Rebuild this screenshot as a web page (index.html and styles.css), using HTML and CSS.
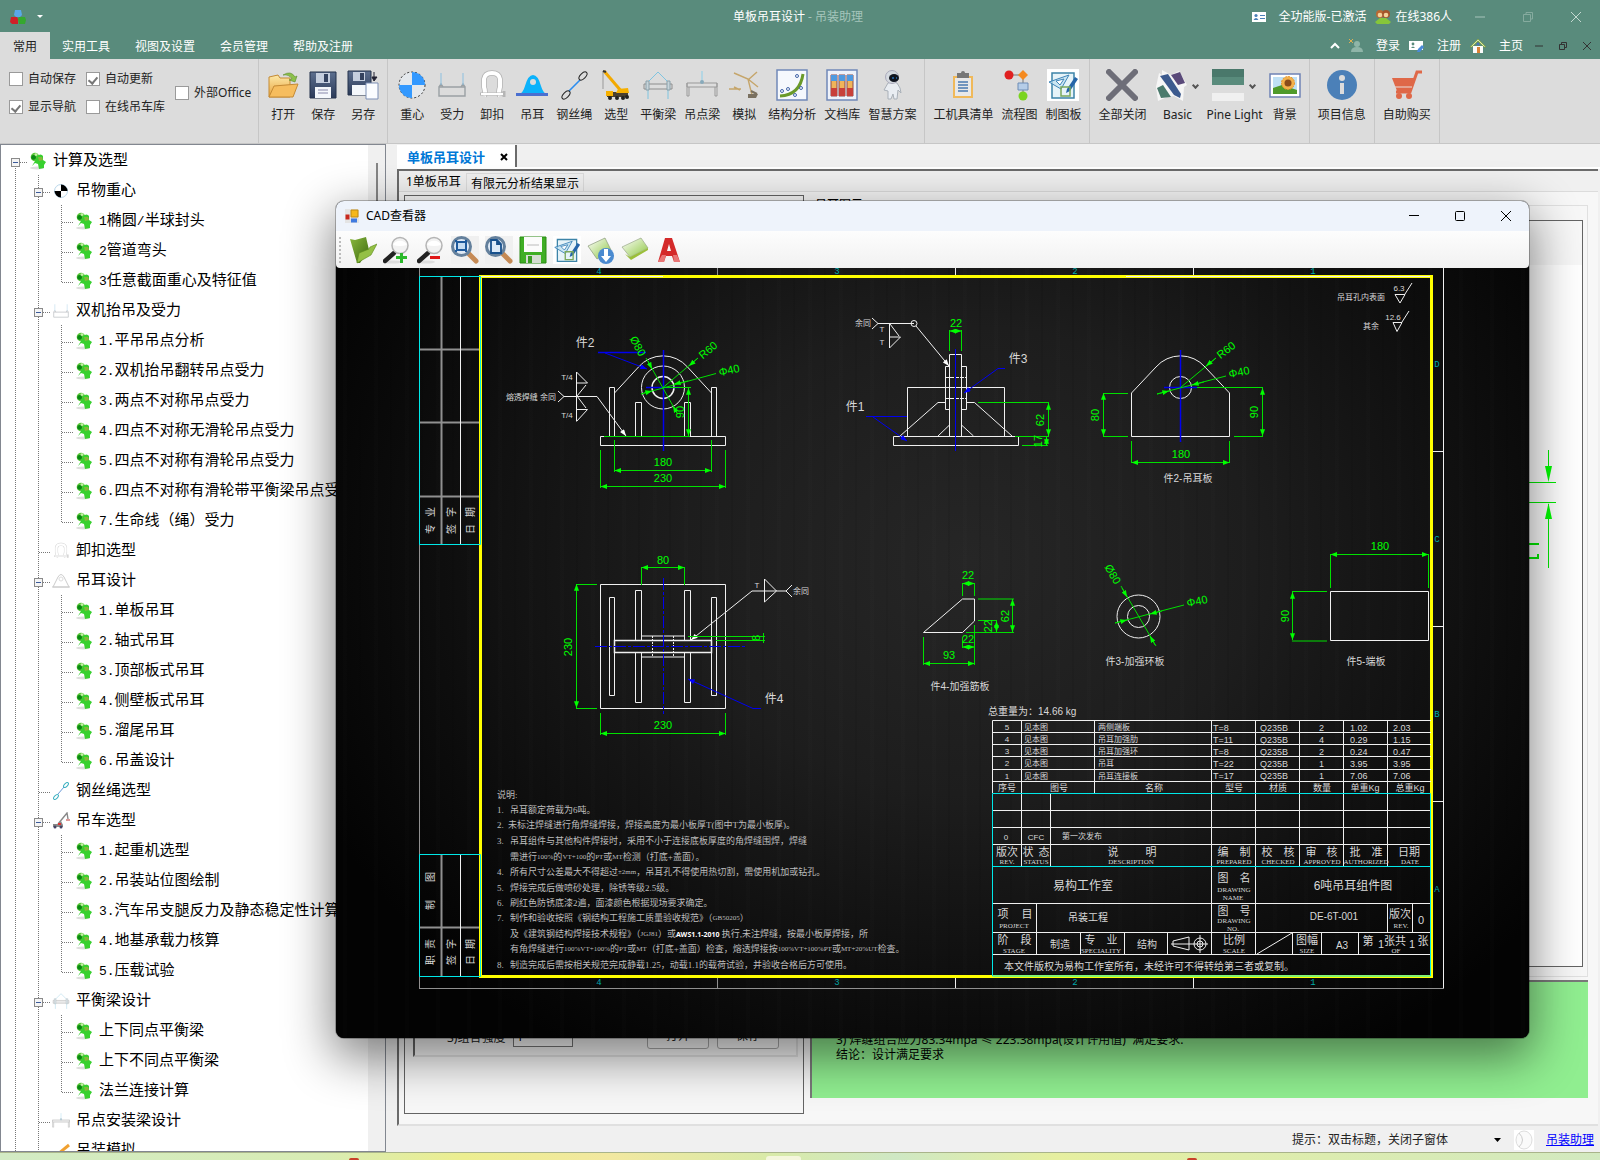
FILE: index.html
```html
<!DOCTYPE html>
<html lang="zh-CN">
<head>
<meta charset="utf-8">
<title>单板吊耳设计 - 吊装助理</title>
<link rel="stylesheet" href="styles.css">
</head>
<body>
<svg class="defs" width="0" height="0" aria-hidden="true">
  <defs>
    <linearGradient id="g-folder" x1="0" y1="0" x2="0" y2="1"><stop offset="0" stop-color="#fde9a8"/><stop offset="1" stop-color="#e8a33c"/></linearGradient>
    <linearGradient id="g-disk" x1="0" y1="0" x2="0" y2="1"><stop offset="0" stop-color="#5d6f8f"/><stop offset="1" stop-color="#2b3a58"/></linearGradient>
    <linearGradient id="g-leaf" x1="0" y1="0" x2="1" y2="1"><stop offset="0" stop-color="#8ab83e"/><stop offset="1" stop-color="#3c6a10"/></linearGradient>
    <linearGradient id="g-card" x1="0" y1="0" x2="1" y2="1"><stop offset="0" stop-color="#fff"/><stop offset="1" stop-color="#8dc63f"/></linearGradient>
  </defs>
  <symbol id="i-node" viewBox="0 0 16 18"><ellipse cx="7" cy="16" rx="7" ry="1.5" fill="#ddd"/><circle cx="5" cy="5" r="4.3" fill="#5cc83a"/><circle cx="3.6" cy="5.4" r="2.4" fill="#0b8a14"/><circle cx="6" cy="2.600" r="1.4" fill="#c5f0a8"/><path d="M7 4q4-3 6 0v4l3 2-2 3v3l-5 1-1-5-3-1-3 3 3-5z" fill="#38d02f"/><path d="M8 5l4 0 1 3-4 1z" fill="#86b83c"/></symbol>
  <symbol id="i-cg" viewBox="0 0 32 32"><circle cx="16" cy="16" r="13" fill="#e4e8ec" stroke="#333" stroke-dasharray="2 2"/><path d="M16 16V3a13 13 0 0 1 13 13zM16 16v13A13 13 0 0 1 3 16z" fill="#3399ff"/></symbol>
  <symbol id="i-cgs" viewBox="0 0 18 18"><circle cx="9" cy="9" r="6.500" fill="#fff" stroke="#b9d7ea"/><path d="M9 9V2.500a6.500 6.500 0 0 1 6.500 6.500zM9 9v6.500A6.500 6.500 0 0 1 2.500 9z" fill="#000"/></symbol>
  <symbol id="i-force" viewBox="0 0 32 32"><path d="M3 18h26v9H3zM3 18l2-3 2 3M25 18l2-3 2 3" fill="none" stroke="#9aa0a4" stroke-width="1.4"/><path d="M5 4v12M27 4v12" stroke="#8cc0e0" stroke-width="1"/></symbol>
  <symbol id="i-shackle" viewBox="0 0 32 32"><path d="M8 27q2-4 0-9V10q1-6 8-6t8 6v8q-2 5 0 9" fill="none" stroke="#b4b4b4" stroke-width="5.500"/><path d="M8 27q2-4 0-9V10q1-6 8-6t8 6v8q-2 5 0 9" fill="none" stroke="#fff" stroke-width="4"/><path d="M4 25h24M28 22v6" stroke="#b5b5b5" stroke-width="3"/><path d="M5 25h22" stroke="#fff" stroke-width="2"/></symbol>
  <symbol id="i-lug" viewBox="0 0 32 32"><path d="M3 25q4-1 6-8Q12 6 17 6t8 11q2 7 6 8z" fill="#0bb2fb"/><path d="M0 24h32v3H0z" fill="#4a6fd0"/><circle cx="17" cy="13" r="3" fill="#dcdcdc"/></symbol>
  <symbol id="i-rope" viewBox="0 0 32 32"><path d="M11 22L22 11" stroke="#2a8df0" stroke-width="1.6"/><ellipse cx="25" cy="7" rx="5" ry="2.6" transform="rotate(-45 25 7)" fill="none" stroke="#222"/><ellipse cx="8" cy="26" rx="5" ry="2.6" transform="rotate(-45 8 26)" fill="none" stroke="#222"/></symbol>
  <symbol id="i-crane" viewBox="0 0 32 32"><path d="M4 2L22 23" stroke="#f2a900" stroke-width="3"/><path d="M3 2v18" stroke="#999"/><path d="M3 2l3 1" stroke="#333" stroke-width="2"/><path d="M7 23h21v5H7z" fill="#4a4030"/><path d="M6 22h7v5H6zM18 20l10-1 1 5H16z" fill="#f6b000"/><g fill="#222"><circle cx="10" cy="29" r="2"/><circle cx="17" cy="29" r="2"/><circle cx="23" cy="29" r="2"/><circle cx="27" cy="28" r="2"/></g></symbol>
  <symbol id="i-beam" viewBox="0 0 32 32"><path d="M5 14L16 3l11 11M6 20v10M26 20v10" fill="none" stroke="#7fc4e0"/><path d="M2 15h28v5H2z" fill="#ddd" stroke="#8e8e8e"/><path d="M4 12h3v9H4zM25 12h3v9h-3z" fill="#c7d4da" stroke="#8aa0aa"/></symbol>
  <symbol id="i-spread" viewBox="0 0 32 32"><path d="M16 2v11" stroke="#8cd0ea"/><path d="M1 14h30v4H1zM1 14v13h2V18M31 14v13h-2V18" fill="#ddd" stroke="#999"/><circle cx="16" cy="13" r="2" fill="#8ab"/></symbol>
  <symbol id="i-sim" viewBox="0 0 32 32"><path d="M6 4l14 6 4 16M29 3l-9 8M20 10l10 8M1 20h12M6 18l6 3" fill="none" stroke="#c5a56a" stroke-width="1.4"/><path d="M20 25h10l-2 4h-8z" fill="#7a7060"/><path d="M23 22l6 3" stroke="#7a7060" stroke-width="2"/></symbol>
  <symbol id="i-curve" viewBox="0 0 32 32"><path d="M1 1h30v30H1z" fill="#f5f8fd" stroke="#7088b8" stroke-width="1.5"/><path d="M4 27Q24 26 27 5" fill="none" stroke="#6a9a2a" stroke-width="3"/><g fill="none" stroke="#4466a8"><circle cx="21" cy="7" r="1.5"/><circle cx="6" cy="22" r="1.5"/><circle cx="12" cy="20" r="1.5"/><circle cx="25" cy="19" r="1.5"/><circle cx="19" cy="26" r="1.5"/></g></symbol>
  <symbol id="i-books" viewBox="0 0 32 32"><path d="M1 1h30v30H1z" fill="#eef2fa" stroke="#7088b8" stroke-width="1.5"/><g><path d="M5 6h6v21H5zM13 6h6v21h-6zM21 6h6v21h-6z" fill="#f0b45a" stroke="#8a4a4a"/><path d="M5 6h6v6H5zM13 6h6v6h-6zM21 6h6v6h-6z" fill="#4f9ae0"/><path d="M5 19h6v8H5zM13 19h6v8h-6zM21 19h6v8h-6z" fill="#c8403a"/></g></symbol>
  <symbol id="i-robot" viewBox="0 0 32 32"><path d="M12 14q4-2 9 0l3 5 1 5-3-3-1 9h-3l-1-5-2 5h-3l0-8-4-1z" fill="#e9edf2" stroke="#a9b0b8"/><circle cx="16" cy="8" r="6.500" fill="#d5dae0" stroke="#aab"/><ellipse cx="18" cy="9" rx="5" ry="4" fill="#10151f"/><path d="M16 9h2M20 9h1" stroke="#39f"/></symbol>
  <symbol id="i-clip" viewBox="0 0 32 32"><path d="M6 7h20v22H6z" fill="#f0b95a"/><path d="M8 9h16v18H8z" fill="#e8e8e8"/><path d="M10 4h12v5H10z" fill="#777"/><circle cx="16" cy="4" r="2" fill="#777"/><path d="M11 13h10M11 16h10M11 19h10M11 22h10" stroke="#4a7ab0" stroke-width="1.5"/></symbol>
  <symbol id="i-flow" viewBox="0 0 32 32"><path d="M6 6h14v22" fill="none" stroke="#777"/><circle cx="6" cy="6" r="4.5" fill="#e02020"/><path d="M20 1l5 5-5 5-5-5z" fill="#f58a1f"/><path d="M15 14h10v7H15z" fill="#b5cde8" stroke="#6c8cb5"/><circle cx="20" cy="27" r="4.5" fill="#7ad420"/></symbol>
  <symbol id="i-draft" viewBox="0 0 32 32"><path d="M0 0h32v32H0z" fill="#fff"/><path d="M5 4h22v25H5z" fill="#e6f3f8" stroke="#3d84a8" stroke-width="1.5"/><path d="M2 13L22 6 14 20z" fill="#bfe0f0" fill-opacity=".7" stroke="#3d84b8"/><path d="M9 12l8-2-4 6z" fill="#fff" stroke="#3d84b8"/><path d="M28 8l3 2-8 12-4 2 1-4z" fill="#2464a8"/><path d="M14 18h9v9h-9z" fill="none" stroke="#7aa85a" stroke-width="1.5"/></symbol>
  <symbol id="i-cross" viewBox="0 0 32 32"><path d="M3 3l26 26M29 3L3 29" stroke="#6e6e78" stroke-width="6" stroke-linecap="round"/></symbol>
  <symbol id="i-basic" viewBox="0 0 32 32"><path d="M1 18L4 4l3 2 0-5 9 5 8-4 8 14-3 2-1 14-9-5-7 1-9 4z" fill="#f6f6f6"/><path d="M5 7l8-2 13 20-1 4-6-3z" fill="#3c5a8e"/><path d="M16 6l9-3 5 11-7 2z" fill="#5a4a7a"/><path d="M2 19l6-3 8 12-10 1z" fill="#4a7a6c"/></symbol>
  <symbol id="i-pine" viewBox="0 0 32 32"><path d="M0 0h32v8H0z" fill="#4a786b"/><path d="M0 8h32v8H0z" fill="#598b7c"/><path d="M0 16h32v8H0z" fill="#dcdcdc"/><path d="M0 24h32v8H0z" fill="#f0f0f0"/></symbol>
  <symbol id="i-pic" viewBox="0 0 32 32"><path d="M1 5h30v23H1z" fill="#fff" stroke="#6f83b5" stroke-width="1.5"/><path d="M4 8h24v17H4z" fill="#bfe0f5"/><path d="M4 19l9-3 15 5v4H4z" fill="#4f9a2a"/><circle cx="19" cy="14" r="6.500" fill="#f3b04a" stroke="#e8952a" stroke-dasharray="2 1"/><circle cx="19" cy="14" r="3.5" fill="#8a4a1a"/></symbol>
  <symbol id="i-info" viewBox="0 0 32 32"><circle cx="16" cy="16" r="15" fill="#4b80b8"/><circle cx="16" cy="9" r="3" fill="#dcdcdc"/><path d="M14 14h4v11h-4z" fill="#dcdcdc"/></symbol>
  <symbol id="i-cart" viewBox="0 0 32 32"><path d="M1 9h22l-3 13H6z" fill="#df6848"/><path d="M31 3h-5l-7 20H5" fill="none" stroke="#df6848" stroke-width="3"/><path d="M4 18h17" stroke="#e8e0dc"/><circle cx="8" cy="27" r="3" fill="#df6848"/><circle cx="18" cy="27" r="3" fill="#df6848"/></symbol>
  <symbol id="i-open" viewBox="0 0 32 32"><path d="M2 8l9-2 2 3h10v19H2z" fill="url(#g-folder)" stroke="#c48a35"/><path d="M7 17l24-2-5 13H2z" fill="#f6bd5e" stroke="#c48a35"/><path d="M16 6q8-5 12 2l2-1-2 6-6-2 3-1q-3-5-9-4z" fill="#8cc04a" stroke="#5a8a2a" stroke-width=".6"/></symbol>
  <symbol id="i-save" viewBox="0 0 32 32"><path d="M3 3h26v26H3z" fill="url(#g-disk)" stroke="#25324c"/><path d="M9 4h14v10H9z" fill="#c5cede"/><path d="M17 5h4v8h-4z" fill="#34425f"/><path d="M8 18h16v11H8z" fill="#f4f7fb"/><path d="M11 21h10M11 24h10" stroke="#88a"/></symbol>
  <symbol id="i-saveas" viewBox="0 0 32 32"><path d="M1 2h23v24H1z" fill="url(#g-disk)" stroke="#25324c"/><path d="M6 3h12v9H6z" fill="#c5cede"/><path d="M13 4h4v7h-4z" fill="#34425f"/><path d="M5 16h14v10H5z" fill="#f4f7fb"/><path d="M19 14h12v16H19z" fill="#fafcff" stroke="#7d8fb5"/><path d="M27 3v6M25 8l2 4 3-4z" stroke="#223" fill="#223"/></symbol>
  <symbol id="i-zoom" viewBox="0 0 28 28"><ellipse cx="9" cy="26" rx="9" ry="1.6" fill="#ddd"/><path d="M2 25l9-8" stroke="#222" stroke-width="4.4" stroke-linecap="round"/><circle cx="17" cy="9.500" r="8" fill="#f2f2f2" stroke="#b4b4b4" stroke-width="1.5"/><path d="M10 9a8 8 0 0 1 14 0q-7 2-14 0z" fill="#fff"/></symbol>
  <symbol id="i-lens" viewBox="0 0 28 28"><path d="M0 0h28v28H0z" fill="#f0f0f0"/><path d="M17 17l8 8" stroke="#c58a55" stroke-width="5" stroke-linecap="round"/><circle cx="10.500" cy="10.500" r="9" fill="#dfe9f5" stroke="#64809c" stroke-width="3"/></symbol>
</svg>

<header class="head">
  <div class="titlebar">
    <div class="quick">
      <svg width="16" height="16" viewBox="0 0 16 16"><path d="M5 1h6l1 5-2 2H6L4 6z" fill="#5aa8e8"/><path d="M1 8h6l1 2v5H2l-2-2z" fill="#cf2028"/><path d="M9 8h6l1 3-1 4H9L8 10z" fill="#35a82f"/></svg>
      <svg width="6" height="3" viewBox="0 0 8 4"><path d="M0 0h8L4 4z" fill="#fff"/></svg>
    </div>
    <h1 class="title">单板吊耳设计 <span>- 吊装助理</span></h1>
    <div class="status">
      <svg width="14" height="12" viewBox="0 0 14 12"><path d="M0 1h14v10H0z" fill="#fff"/><circle cx="4" cy="4.500" r="1.600" fill="#4b80b8"/><path d="M1.500 9q2.500-4 5 0zM8 4h5v1H8zM8 7h5v1H8z" fill="#4b80b8"/></svg>
      <span class="lic">全功能版-已激活</span>
      <svg class="ppl" width="16" height="16" viewBox="0 0 16 16"><circle cx="5" cy="5" r="4" fill="#b96a34"/><circle cx="11" cy="5" r="4" fill="#a4552a"/><circle cx="5" cy="6" r="2.300" fill="#f4d29a"/><circle cx="11" cy="6" r="2.300" fill="#f4d29a"/><path d="M0 13l5-4h6l5 4-2 2H2z" fill="#86c63a"/></svg>
      <span>在线386人</span>
      <button class="wb" aria-label="最小化"><svg width="12" height="12"><path d="M1 6h10" stroke="#a8c4bb"/></svg></button>
      <button class="wb" aria-label="还原"><svg width="12" height="12" fill="none" stroke="#86ab9f"><path d="M1.500 3.500h7v7h-7zM4 3V1.500h6.500V8H9"/></svg></button>
      <button class="wb" aria-label="关闭"><svg width="12" height="12"><path d="M1 1l10 10M11 1L1 11" stroke="#c4d8d1"/></svg></button>
    </div>
  </div>
  <div class="menubar">
    <nav class="tabs">
      <button class="tab on">常用</button><button class="tab">实用工具</button><button class="tab">视图及设置</button><button class="tab">会员管理</button><button class="tab">帮助及注册</button>
    </nav>
    <div class="tools">
      <button class="tl" aria-label="折叠"><svg width="10" height="7"><path d="M1 6l4-4 4 4" fill="none" stroke="#fff" stroke-width="2"/></svg></button>
      <button class="tl"><svg width="14" height="16" viewBox="0 0 14 16"><circle cx="8" cy="6" r="3" fill="#8fb5a8"/><path d="M2 14q0-5 6-5t6 5z" fill="#8fb5a8"/><path d="M0 1l4 4M4 1L0 5" stroke="#e0b050"/></svg>登录</button>
      <button class="tl"><svg width="15" height="14" viewBox="0 0 15 14"><path d="M0 2h14v9H0z" fill="#fff"/><circle cx="4" cy="5" r="1.400" fill="#598b7c"/><path d="M2 9q2-3 4 0z" fill="#598b7c"/><path d="M13 6l2 2-4 5-3 0 1-3z" fill="#4a8ad8"/></svg>注册</button>
      <button class="tl"><svg width="16" height="16" viewBox="0 0 16 16"><path d="M3 8h10v7H3z" fill="#fbfbfb"/><path d="M0 9l8-8 8 8-2 0-6-6-6 6z" fill="#d8e8a8" stroke="#7a9a3a" stroke-width=".7"/><path d="M7 9h3v6H7z" fill="#d98235"/><path d="M7 5h2v2H7z" fill="#4a70c0"/></svg>主页</button>
      <div class="mdi">
        <button aria-label="最小化子窗体"><svg width="10" height="10"><path d="M1 5h8" stroke="#333"/></svg></button><button aria-label="还原子窗体"><svg width="10" height="10" fill="none" stroke="#333"><path d="M1.500 3.500h5v5h-5zM3.500 3V1.500h5v5H7"/></svg></button><button aria-label="关闭子窗体"><svg width="10" height="10"><path d="M1 1l8 8M9 1L1 9" stroke="#333"/></svg></button>
      </div>
    </div>
  </div>
</header>

<section class="ribbon">
  <div class="checks">
    <div><label><input type="checkbox">自动保存</label><label><input type="checkbox" checked>显示导航</label></div>
    <div><label><input type="checkbox" checked>自动更新</label><label><input type="checkbox">在线吊车库</label></div>
    <div class="mid"><label><input type="checkbox">外部Office</label></div>
  </div>
  <div class="group">
    <button><svg><use href="#i-open"/></svg>打开</button><button><svg><use href="#i-save"/></svg>保存</button><button><svg><use href="#i-saveas"/></svg>另存</button>
  </div>
  <div class="group">
    <button><svg><use href="#i-cg"/></svg>重心</button><button><svg><use href="#i-force"/></svg>受力</button><button><svg><use href="#i-shackle"/></svg>卸扣</button><button><svg><use href="#i-lug"/></svg>吊耳</button><button><svg><use href="#i-rope"/></svg>钢丝绳</button><button><svg><use href="#i-crane"/></svg>选型</button><button><svg><use href="#i-beam"/></svg>平衡梁</button><button><svg><use href="#i-spread"/></svg>吊点梁</button><button><svg><use href="#i-sim"/></svg>模拟</button><button><svg><use href="#i-curve"/></svg>结构分析</button><button><svg><use href="#i-books"/></svg>文档库</button><button><svg><use href="#i-robot"/></svg>智慧方案</button>
  </div>
  <div class="group">
    <button><svg><use href="#i-clip"/></svg>工机具清单</button><button><svg><use href="#i-flow"/></svg>流程图</button><button><svg><use href="#i-draft"/></svg>制图板</button>
  </div>
  <div class="group">
    <button><svg><use href="#i-cross"/></svg>全部关闭</button><button class="menu"><span class="drop"><svg><use href="#i-basic"/></svg><i></i></span>Basic</button><button class="menu"><span class="drop"><svg><use href="#i-pine"/></svg><i></i></span>Pine Light</button><button><svg><use href="#i-pic"/></svg>背景</button>
  </div>
  <div class="group"><button><svg><use href="#i-info"/></svg>项目信息</button></div>
  <div class="group"><button><svg><use href="#i-cart"/></svg>自助购买</button></div>
</section>

<div class="work">
  <aside class="side">
    <ul class="tree root">
      <li><div class="row"><button class="ex" aria-label="折叠"></button><svg><use href="#i-node"/></svg>计算及选型</div>
      <ul class="tree">
        <li><div class="row"><button class="ex" aria-label="折叠"></button><svg><use href="#i-cgs"/></svg>吊物重心</div>
          <ul class="tree">
            <li><div class="row leaf"><svg><use href="#i-node"/></svg><b>1</b>椭圆<b>/</b>半球封头</div></li>
            <li><div class="row leaf"><svg><use href="#i-node"/></svg><b>2</b>管道弯头</div></li>
            <li><div class="row leaf"><svg><use href="#i-node"/></svg><b>3</b>任意截面重心及特征值</div></li>
          </ul></li>
        <li><div class="row"><button class="ex" aria-label="折叠"></button><svg class="pale"><use href="#i-force"/></svg>双机抬吊及受力</div>
          <ul class="tree">
            <li><div class="row leaf"><svg><use href="#i-node"/></svg><b>1.</b>平吊吊点分析</div></li>
            <li><div class="row leaf"><svg><use href="#i-node"/></svg><b>2.</b>双机抬吊翻转吊点受力</div></li>
            <li><div class="row leaf"><svg><use href="#i-node"/></svg><b>3.</b>两点不对称吊点受力</div></li>
            <li><div class="row leaf"><svg><use href="#i-node"/></svg><b>4.</b>四点不对称无滑轮吊点受力</div></li>
            <li><div class="row leaf"><svg><use href="#i-node"/></svg><b>5.</b>四点不对称有滑轮吊点受力</div></li>
            <li><div class="row leaf"><svg><use href="#i-node"/></svg><b>6.</b>四点不对称有滑轮带平衡梁吊点受力</div></li>
            <li><div class="row leaf"><svg><use href="#i-node"/></svg><b>7.</b>生命线（绳）受力</div></li>
          </ul></li>
        <li><div class="row leaf"><svg class="pale"><use href="#i-shackle"/></svg>卸扣选型</div></li>
        <li><div class="row"><button class="ex" aria-label="折叠"></button><svg viewBox="0 0 18 18"><path d="M1 15L6 5q3-5 6 0l5 10zM0 15h18" fill="none" stroke="#ccc"/><circle cx="9" cy="7" r="2" fill="none" stroke="#ddd"/></svg>吊耳设计</div>
          <ul class="tree">
            <li><div class="row leaf"><svg><use href="#i-node"/></svg><b>1.</b>单板吊耳</div></li>
            <li><div class="row leaf"><svg><use href="#i-node"/></svg><b>2.</b>轴式吊耳</div></li>
            <li><div class="row leaf"><svg><use href="#i-node"/></svg><b>3.</b>顶部板式吊耳</div></li>
            <li><div class="row leaf"><svg><use href="#i-node"/></svg><b>4.</b>侧壁板式吊耳</div></li>
            <li><div class="row leaf"><svg><use href="#i-node"/></svg><b>5.</b>溜尾吊耳</div></li>
            <li><div class="row leaf"><svg><use href="#i-node"/></svg><b>6.</b>吊盖设计</div></li>
          </ul></li>
        <li><div class="row leaf"><svg viewBox="0 0 18 18"><path d="M6 12l6-7" stroke="#6a9ad8"/><ellipse cx="14" cy="3" rx="3" ry="1.600" transform="rotate(-45 14 3)" fill="none" stroke="#3ab0c0"/><ellipse cx="4" cy="15" rx="3" ry="1.600" transform="rotate(-45 4 15)" fill="none" stroke="#3ab0c0"/></svg>钢丝绳选型</div></li>
        <li><div class="row"><button class="ex" aria-label="折叠"></button><svg viewBox="0 0 18 18"><path d="M6 12L15 1l1 6" fill="none" stroke="#888" stroke-width="1.400"/><path d="M1 12h6l2-3 2 4v2H1z" fill="#888"/><path d="M14 7h4v2h-4z" fill="#d99"/><path d="M6 11h3v2H6z" fill="#d33"/><circle cx="3" cy="15" r="1.500" fill="#446"/><circle cx="9" cy="15" r="1.500" fill="#446"/></svg>吊车选型</div>
          <ul class="tree">
            <li><div class="row leaf"><svg><use href="#i-node"/></svg><b>1.</b>起重机选型</div></li>
            <li><div class="row leaf"><svg><use href="#i-node"/></svg><b>2.</b>吊装站位图绘制</div></li>
            <li><div class="row leaf"><svg><use href="#i-node"/></svg><b>3.</b>汽车吊支腿反力及静态稳定性计算</div></li>
            <li><div class="row leaf"><svg><use href="#i-node"/></svg><b>4.</b>地基承载力核算</div></li>
            <li><div class="row leaf"><svg><use href="#i-node"/></svg><b>5.</b>压载试验</div></li>
          </ul></li>
        <li><div class="row"><button class="ex" aria-label="折叠"></button><svg class="pale"><use href="#i-beam"/></svg>平衡梁设计</div>
          <ul class="tree">
            <li><div class="row leaf"><svg><use href="#i-node"/></svg>上下同点平衡梁</div></li>
            <li><div class="row leaf"><svg><use href="#i-node"/></svg>上下不同点平衡梁</div></li>
            <li><div class="row leaf"><svg><use href="#i-node"/></svg>法兰连接计算</div></li>
          </ul></li>
        <li><div class="row leaf"><svg class="pale"><use href="#i-spread"/></svg>吊点安装梁设计</div></li>
        <li><div class="row leaf"><svg viewBox="0 0 18 18"><path d="M6 12L17 3" stroke="#f0a030" stroke-width="3"/></svg>吊装模拟</div></li>
      </ul></li>
    </ul>
    <div class="scroll"><i></i></div>
  </aside>

  <main class="main">
    <div class="doctabs"><button class="doctab">单板吊耳设计<svg width="8" height="8"><path d="M1 1l6 6M7 1L1 7" stroke="#000" stroke-width="2"/></svg></button></div>
    <div class="page">
      <div class="subtabs"><button class="st on">1单板吊耳</button><button class="st">有限元分析结果显示</button></div>
      <div class="cols">
        <div class="left">
          <div class="params">
            <label for="strength">3)组合强度</label><input id="strength" type="text" value="1">
            <button>打开</button><button>保存</button>
          </div>
        </div>
        <div class="right">
          <fieldset class="figure">
            <legend>吊耳图示</legend>
            <div class="fig">
              <svg width="60" height="700" viewBox="1521 221 60 700"><path d="M1521 482.500h34M1521 502.500h34M1547.500 450v30M1547.500 504v64" stroke="#0e0" stroke-width="1"/><path d="M1544 466h7l-3.500 16zM1544 519h7l-3.500-16z" fill="#0f0"/><path d="M1521 544h17M1521 558h16v-4" fill="none" stroke="#0e0" stroke-width="2"/></svg>
            </div>
          </fieldset>
          <div class="result"><p>3) 焊缝组合应力83.34mpa ≤ 223.38mpa(设计许用值)&nbsp; 满足要求.</p><p>结论：设计满足要求</p></div>
        </div>
      </div>
    </div>
    <footer class="foot">
      <span>提示：双击标题，关闭子窗体</span>
      <svg width="7" height="4"><path d="M0 0h7L3.500 4z" fill="#000"/></svg>
      <svg class="ring" width="20" height="20"><path d="M0 0h20v20H0z" fill="#fff"/><ellipse cx="10" cy="10" rx="8" ry="9" fill="#fafafa" stroke="#ddd"/><path d="M5 3q7 7 0 14" fill="none" stroke="#ccc"/></svg>
      <a href="#">吊装助理</a>
    </footer>
  </main>
</div>
<div class="desk"><i></i><b></b><i></i></div>

<section class="win" aria-label="CAD查看器">
  <div class="wtitle">
    <svg width="14" height="14" viewBox="0 0 14 14"><path d="M0 0h14v14H0z" fill="#e4e4e4"/><path d="M6 1h7v7H6z" fill="#f5b81c" stroke="#c08a10"/><path d="M.5 5.500h4v5h-4z" fill="#c8281e"/><path d="M6 9.500h6v4H6z" fill="#3f7ae0"/></svg>
    <span>CAD查看器</span>
    <button aria-label="最小化"><svg width="12" height="12"><path d="M1 5.500h10" stroke="#000"/></svg></button><button aria-label="最大化"><svg width="12" height="12"><rect x="1.500" y="1.500" width="9" height="9" rx="1" fill="none" stroke="#000"/></svg></button><button aria-label="关闭"><svg width="12" height="12"><path d="M1 1l10 10M11 1L1 11" stroke="#000"/></svg></button>
  </div>
  <div class="wtools">
    <i class="grip"></i>
    <button aria-label="打开"><svg viewBox="0 0 28 28"><path d="M1 3l5 1 11-3 3 13-9 13-3 0z" fill="url(#g-leaf)"/><path d="M10 17l10-4 1-2 7-3-6 11-14 8z" fill="#94c045" stroke="#5a8a1a" stroke-width=".6"/></svg></button>
    <button aria-label="放大"><svg viewBox="0 0 28 28"><use href="#i-zoom"/><path d="M17 17h3v3h4v3h-4v4h-3v-4h-4v-3h4z" fill="#2ab82a"/></svg></button>
    <button aria-label="缩小"><svg viewBox="0 0 28 28"><use href="#i-zoom"/><path d="M13 20h10v3H13z" fill="#e01818"/></svg></button>
    <button aria-label="窗口缩放"><svg viewBox="0 0 28 28"><use href="#i-lens"/><path d="M6 6h9v8H6z" fill="#c5dcf2" stroke="#1e5a9c" stroke-width="2"/><path d="M4 4h2v2H4zM14 4h2v2h-2zM4 14h2v2H4zM14 14h2v2h-2z" fill="#1e5a9c"/></svg></button>
    <button aria-label="全图"><svg viewBox="0 0 28 28"><use href="#i-lens"/><path d="M6 4h6l4 4v9H6zM12 4v4h4" fill="#dceaf8" stroke="#17508c" stroke-width="1.800"/></svg></button>
    <button aria-label="保存"><svg viewBox="0 0 28 28"><path d="M1 1h26v26H1z" fill="#3fae24" stroke="#2a8a14"/><path d="M5 1h18v15H5z" fill="#fbfbfb"/><path d="M8 9h12" stroke="#bbb"/><path d="M7 19h15v8H7z" fill="#d5dcd2"/><path d="M9 20h4v7H9z" fill="#3a9a24"/></svg></button>
    <button aria-label="制图"><svg><use href="#i-draft"/></svg></button>
    <button aria-label="下载"><svg viewBox="0 0 28 28"><path d="M1 10L18 2l6 12-14 9z" fill="url(#g-card)" stroke="#8a9a7a" stroke-width=".7"/><circle cx="19" cy="20" r="8" fill="#4a8ad0"/><path d="M17 13h4v7h3l-5 6-5-6h3z" fill="#fff"/></svg></button>
    <button aria-label="卡片"><svg viewBox="0 0 28 28"><path d="M1 11L20 2l7 10-18 9z" fill="url(#g-card)" stroke="#9aa88a" stroke-width=".7"/><path d="M4 18l5 3 18-9 0 2-17 10z" fill="#9bbf3a"/></svg></button>
    <button aria-label="文字"><svg viewBox="0 0 28 28"><path d="M3 26L10 2h7l8 24h-6l-2-6h-6l-2 6zM12 15h4l-2-7z" fill="#d42a2a" fill-rule="evenodd"/><path d="M3 26l4-7h4l-2 7zM19 26l-1-7h4l3 7z" fill="#e88" fill-opacity=".8"/></svg></button>
  </div>
  <svg class="cad" viewBox="336 268 1193 770" role="img" aria-label="6吨吊耳组件图">
    <defs>
      <marker id="ag" viewBox="0 0 8 6" refX="8" refY="3" markerWidth="7" markerHeight="5" orient="auto-start-reverse" markerUnits="userSpaceOnUse"><path d="M0 0l8 3-8 3z" fill="#0f0"/></marker>
      <marker id="ab" viewBox="0 0 8 6" refX="8" refY="3" markerWidth="8" markerHeight="5" orient="auto-start-reverse" markerUnits="userSpaceOnUse"><path d="M0 0l8 3-8 3z" fill="#00f"/></marker>
      <marker id="aw" viewBox="0 0 8 6" refX="8" refY="3" markerWidth="8" markerHeight="5" orient="auto-start-reverse" markerUnits="userSpaceOnUse"><path d="M0 0l8 3-8 3z" fill="#fff"/></marker>
    </defs>

    <!-- sheet frame -->
    <g>
      <path class="gr" d="M419.500 268V988.500M717.500 268v7M717.500 978v10M419 988.500H1444"/>
      <path class="w" d="M1443.500 268V988M955.500 268v7M1193.500 268v7M955.500 978v10M1193.500 978v10M1432 451.500h11M1432 626.500h11M1432 801.500h11"/>
      <path class="gr" d="M441.500 277V544M419 349.500h61M419 422.500h61M419 496.500h61M441.500 855V976M419 927.500h61" stroke-width="2"/>
      <path class="w" d="M460.500 277V544M460.500 855V976"/>
      <path class="y" d="M480.500 276.500H1431.500V976.500H480.500z"/>
      <path class="c" d="M419.500 276.500H480.500V544.500H419.500zM419.500 854.500H480.500V976.500H419.500z"/>
      <path class="w" d="M481 276.500H663M1126 276.500H1430"/>
    </g>
    <g class="t mono cy m"><text x="599" y="272">4</text><text x="837" y="272">3</text><text x="1075" y="272">2</text><text x="1313" y="272">1</text><text x="599" y="983">4</text><text x="837" y="983">3</text><text x="1075" y="983">2</text><text x="1313" y="983">1</text><text x="1437" y="365">D</text><text x="1437" y="540">C</text><text x="1437" y="715">B</text><text x="1437" y="890">A</text></g>
    <g class="t s10 m">
      <text transform="translate(430 529) rotate(-90)">专</text><text transform="translate(430 512) rotate(-90)">业</text>
      <text transform="translate(451 529) rotate(-90)">签</text><text transform="translate(451 512) rotate(-90)">字</text>
      <text transform="translate(470 529) rotate(-90)">日</text><text transform="translate(470 512) rotate(-90)">期</text>
      <text transform="translate(430 905) rotate(-90)">制</text><text transform="translate(430 877) rotate(-90)">图</text>
      <text transform="translate(430 960) rotate(-90)">职</text><text transform="translate(430 944) rotate(-90)">责</text>
      <text transform="translate(451 960) rotate(-90)">签</text><text transform="translate(451 944) rotate(-90)">字</text>
      <text transform="translate(470 960) rotate(-90)">日</text><text transform="translate(470 944) rotate(-90)">期</text>
    </g>

    <!-- front view -->
    <g class="w">
      <path d="M600.500 436.500h125v9h-125zM609.500 436V387.500h5V436M711.500 436V387.500h5V436M635.500 436V402.500h6V436M684.500 436V402.500h6V436M614.500 393L638.500 367A32.500 32.500 0 0 1 687.500 367L711.500 393"/>
      <circle cx="663" cy="387.500" r="21.500"/><circle cx="663" cy="387.500" r="11" stroke-width="1.500"/>
      <path d="M576.500 372v49M576.500 372l11 11h-11M586 385l-9 11 9 12M576.500 409.500h11l-11 12M558 391l6 5.500-6 5.500M564 396.500h33"/>
      <path d="M597 396.500L626 436" marker-end="url(#aw)"/>
    </g>
    <path class="b" d="M663.500 350V451M646 387.500h34M598 352.500h48" stroke-width="1.500"/>
    <path class="b" d="M605 353L647 369" marker-end="url(#ab)"/>
    <g class="g">
      <path d="M614.500 440v32M711.500 440v32M600.500 450v38M725.500 450v38M663 387.500h28M604 436.500h86"/>
      <path class="d" d="M614.500 470.500h97"/><path class="d" d="M600.500 486.500h125"/><path class="d" d="M688.500 388V436"/>
      <path d="M646 358l31 55M663 387.500L698 358M641 394L716 373.500"/>
      <path class="e" d="M648 361l4 8"/><path class="e" d="M698 358l-9 8"/><path class="e" d="M688 381l-14 3"/><path class="e" d="M641 394l11-3"/><path class="e" d="M677 413l-4-7"/>
    </g>
    <g class="t s11 gt m"><text x="663" y="462">180</text><text x="663" y="478">230</text><text transform="translate(680 412) rotate(-90)">90</text><text transform="translate(638 346) rotate(61)">Ø80</text><text transform="translate(708 350) rotate(-40)">R60</text><text transform="translate(729 370) rotate(-13)">Φ40</text></g>
    <g class="t m"><text class="s12" x="585" y="343">件2</text><text x="567" y="377">T/4</text><text x="567" y="415">T/4</text><text x="531" y="397">熔透焊缝 余同</text></g>

    <!-- plan view -->
    <g class="w">
      <path d="M600.500 584.500h125v124h-125zM609.500 597.500h5v98h-5zM711.500 597.500h5v98h-5zM635.500 640V590.500h6V640M684.500 640V590.500h6V640M635.500 653v49.500h6V653M684.500 653v49.500h6V653M641.500 640v-4h43v4M641.500 653v4h43v-4"/>
      <path d="M614.500 640.500h97v12h-97z" stroke-width="1.500"/>
      <path d="M652.500 636v21M673.500 636v21" stroke-dasharray="2 1"/>
      <path d="M764.500 579v23M764.500 579l12 12-12 11M752 591h34M792 585l-6 6 6 6"/>
      <path d="M752 591L691 640" marker-end="url(#aw)"/>
    </g>
    <path class="b" d="M663.500 578V714M595 646.500H745" stroke-dasharray="12 2 3 2"/>
    <path class="b" d="M761 708.500h-8L688 679" marker-end="url(#ab)"/>
    <g class="g">
      <path d="M641.500 567v18M684.500 567v18M576 584.500h21M576 708.500h21M600.500 713v22M725.500 713v22M688 636.500h77M716 640.500h49M763.500 633v10"/>
      <path class="d" d="M641.500 567.500h43"/><path class="d" d="M576.500 584v124"/><path class="d" d="M600.500 733.500h125"/>
    </g>
    <g class="t s11 gt m"><text x="663" y="560">80</text><text x="663" y="725">230</text><text transform="translate(568 647) rotate(-90)">230</text><text transform="translate(756 638) rotate(-90)">8</text></g>
    <g class="t m"><text x="757" y="585">T</text><text x="801" y="591">余同</text><text class="s12" x="774" y="699">件4</text></g>

    <!-- side view -->
    <g class="w">
      <path d="M893.500 436.500h125v9h-125zM907.500 436V387.500h97V436M949.500 436V354.500h12V436M949.500 366.500h-4v43h4M961.500 366.500h5v43h-5M900 436l38-33.500h7M967 402.500h7.500L1012 436M938 436l11.500-11M961.500 425l12 11"/>
      <path d="M945 377.500h22M945 398.500h22" stroke-dasharray="4 1"/>
      <path d="M872 318l6 5.500-6 5.500M878 323.500h36M889.500 323v25M890 324l9 12M889.500 337h11l-11 11"/><circle cx="914" cy="323.500" r="3"/>
      <path d="M916 326L949 366" marker-end="url(#aw)"/>
    </g>
    <g class="b"><path d="M955.500 349V451M866 416.500h41"/><path d="M1005 368.500h-7L964 393" marker-end="url(#ab)"/><path d="M873 417L907 441" marker-end="url(#ab)"/></g>
    <g class="g">
      <path d="M949.500 330v21M961.500 330v21M978 402.500h71M1015 436.500h34M1022 445.500h26"/>
      <path class="d" d="M949.500 331h12"/><path class="d" d="M1048.500 403v33"/><path class="d" d="M1046.500 437v9"/>
    </g>
    <g class="t s11 gt m"><text x="956" y="323">22</text><text transform="translate(1040 420) rotate(-90)">62</text><text transform="translate(1038 441) rotate(-90)">17</text></g>
    <g class="t m"><text x="863" y="323">余同</text><text x="882" y="329">T</text><text x="882" y="342">T</text><text class="s12" x="1018" y="359">件3</text><text class="s12" x="855" y="407">件1</text></g>

    <!-- part 2 -->
    <g class="w"><path d="M1131.500 436.500V393L1156 367A32.500 32.500 0 0 1 1205 367L1229.500 393V436.500z"/><circle cx="1180.500" cy="387.500" r="11"/></g>
    <path class="b" d="M1180.500 350v92M1164 387.500h33" stroke-width="1.500"/>
    <g class="g">
      <path d="M1103 393.500h25M1103 436.500h25M1197 387.500h66M1234 436.500h29M1131.500 441v22M1229.500 441v22M1180.500 387.500L1216 358M1157 394L1226 376"/>
      <path class="d" d="M1103.500 393v43"/><path class="d" d="M1262.500 388v48"/><path class="d" d="M1131.500 462.500h98"/>
      <path class="e" d="M1216 358l-10 8"/><path class="e" d="M1204 382l-12 3"/><path class="e" d="M1157 394l12-3"/>
    </g>
    <g class="t s11 gt m"><text x="1181" y="454">180</text><text transform="translate(1095 415) rotate(-90)">80</text><text transform="translate(1254 412) rotate(-90)">90</text><text transform="translate(1226 350) rotate(-38)">R60</text><text transform="translate(1239 372) rotate(-12)">Φ40</text></g>
    <text class="t s10 m" x="1188" y="478">件2-吊耳板</text>

    <!-- part 4 -->
    <path class="w" d="M923.500 632.500L962.500 599h12v22l-12 11.500z"/>
    <g class="g">
      <path d="M962.500 583v13M974.500 583v13M978 599h36M966 632.500h48M978 620.500h19M962.500 637v11M974.500 625v40M923.500 637v28"/>
      <path class="d" d="M962.500 583.500h12"/><path class="d" d="M1012.500 599v33"/><path class="d" d="M996.500 621v11"/><path class="d" d="M962.500 647h12"/><path class="d" d="M923.500 663.500h51"/>
    </g>
    <g class="t s11 gt m"><text x="968" y="575">22</text><text x="968" y="639">22</text><text x="949" y="655">93</text><text transform="translate(1005 616) rotate(-90)">62</text><text transform="translate(988 626) rotate(-90)">22</text></g>
    <text class="t s10 m" x="960" y="686">件4-加强筋板</text>

    <!-- part 3 -->
    <g class="w"><circle cx="1138.500" cy="616.500" r="21.500"/><circle cx="1138.500" cy="616.500" r="11"/></g>
    <g class="g"><path d="M1121 586l35 60M1115 623L1184 605"/><path class="e" d="M1122 588l5 9"/><path class="e" d="M1155 645l-5-9"/><path class="e" d="M1115 623l12-3"/><path class="e" d="M1162 611l-12 3"/></g>
    <g class="t s11 gt m"><text transform="translate(1113 574) rotate(60)">Ø80</text><text transform="translate(1197 601) rotate(-12)">Φ40</text></g>
    <text class="t s10 m" x="1135" y="661">件3-加强环板</text>

    <!-- part 5 -->
    <path class="w" d="M1330.500 591.500h98v49h-98z"/>
    <g class="g"><path d="M1330.500 554v34M1428.500 554v34M1292 591.500h35M1292 641h35"/><path class="d" d="M1330.500 554.500h98"/><path class="d" d="M1292.500 592v48"/></g>
    <g class="t s11 gt m"><text x="1380" y="546">180</text><text transform="translate(1285 616) rotate(-90)">90</text></g>
    <text class="t s10 m" x="1366" y="661">件5-端板</text>

    <!-- surface marks -->
    <path class="w" d="M1395 294.500h10l-5 8.500zM1405 294l7-11M1393 322.500h9l-5 9zM1402 322l7-11"/>
    <g class="t m"><text x="1361" y="297">吊耳孔内表面</text><text x="1371" y="326">其余</text><text x="1399" y="288">6.3</text><text x="1393" y="317">12.6</text></g>

    <!-- notes -->
    <g class="t note">
      <text x="497" y="795">说明:</text>
      <text x="497" y="810">1.</text><text x="510" y="810">吊耳额定荷载为6吨。</text>
      <text x="497" y="825">2.</text><text x="508" y="825">未标注焊缝进行角焊缝焊接，焊接高度为最小板厚T(图中T为最小板厚)。</text>
      <text x="497" y="841">3.</text><text x="510" y="841">吊耳组件与其他构件焊接时，采用不小于连接底板厚度的角焊缝围焊，焊缝</text>
      <text x="510" y="857">需进行<tspan class="a">100%</tspan>的<tspan class="a">VT+100</tspan>的<tspan class="a">PT</tspan>或<tspan class="a">MT</tspan>检测（打底+盖面）。</text>
      <text x="497" y="872">4.</text><text x="510" y="872">所有尺寸公差最大不得超过<tspan class="a">±2mm</tspan>，吊耳孔不得使用热切割，需使用机加或钻孔。</text>
      <text x="497" y="888">5.</text><text x="510" y="888">焊接完成后做喷砂处理，除锈等级2.5级。</text>
      <text x="497" y="903">6.</text><text x="510" y="903">刷红色防锈底漆2遍，面漆颜色根据现场要求确定。</text>
      <text x="497" y="918">7.</text><text x="510" y="918">制作和验收按照《钢结构工程施工质量验收规范》（<tspan class="a">GB50205</tspan>）</text>
      <text x="510" y="934">及《建筑钢结构焊接技术规程》（<tspan class="a">JGJ81</tspan>）或<tspan class="bold">AWS1.1-2010</tspan> 执行,未注焊缝，按最小板厚焊接，所</text>
      <text x="510" y="949">有角焊缝进行<tspan class="a">100%VT+100%</tspan>的<tspan class="a">PT</tspan>或<tspan class="a">MT</tspan>（打底+盖面）检查，熔透焊接按<tspan class="a">100%VT+100%PT</tspan>或<tspan class="a">MT+20%UT</tspan>检查。</text>
      <text x="497" y="965">8.</text><text x="510" y="965">制造完成后需按相关规范完成静载1.25，动载1.1的载荷试验，并验收合格后方可使用。</text>
    </g>

    <!-- parts list and title block -->
    <text class="t s10" x="988" y="711">总重量为：14.66 kg</text>
    <g class="w">
      <path d="M992.500 793V720.500H1431M992 732.500h439M992 744.500h439M992 756.500h439M992 769.500h439M992 781.500h439M1021.500 720V867M1094.500 720v73M1211.500 720V955M1255.500 720V955M1299.500 720V867M1343.500 720V867M1387.500 720V867M1050.500 794v73"/>
      <path d="M992 810.500h439M992 827.500h439M992 844.500h439M992 903.500h439M992 932.500h439M992 954.500h439M1036.500 903v52M1387.500 903v29M1412.500 903v29M1080.500 932v23M1124.500 932v23M1167.500 932v23M1292.500 932v23M1321.500 932v23M1358.500 932v23"/>
    </g>
    <path class="c" d="M992.500 793.500H1430.500V976H992.500zM992 866.500h439"/>
    <path class="w" d="M1257 954l35-21M1173 941l16-4v13l-16-4zM1171 944h37M1200 935v18"/>
    <g class="w"><circle cx="1200" cy="944" r="6"/><circle cx="1200" cy="944" r="3"/></g>
    <g class="t m"><text x="1007" y="727">5</text><text x="1007" y="739">4</text><text x="1007" y="751">3</text><text x="1007" y="763">2</text><text x="1007" y="776">1</text><text x="1006" y="837">0</text><text x="1036" y="837">CFC</text><text x="1082" y="836">第一次发布</text></g>
    <g class="t"><text x="1024" y="727">见本图</text><text x="1024" y="739">见本图</text><text x="1024" y="751">见本图</text><text x="1024" y="763">见本图</text><text x="1024" y="776">见本图</text><text x="1098" y="727">两侧端板</text><text x="1098" y="739">吊耳加强肋</text><text x="1098" y="751">吊耳加强环</text><text x="1098" y="763">吊耳</text><text x="1098" y="776">吊耳连接板</text></g>
    <g class="t s9"><text x="1213" y="728">T=8</text><text x="1213" y="740">T=11</text><text x="1213" y="752">T=8</text><text x="1213" y="764">T=22</text><text x="1213" y="776">T=17</text>
    <text x="1260" y="728">Q235B</text><text x="1260" y="740">Q235B</text><text x="1260" y="752">Q235B</text><text x="1260" y="764">Q235B</text><text x="1260" y="776">Q235B</text>
    <text x="1319" y="728">2</text><text x="1319" y="740">4</text><text x="1319" y="752">2</text><text x="1319" y="764">1</text><text x="1319" y="776">1</text>
    <text x="1350" y="728">1.02</text><text x="1350" y="740">0.29</text><text x="1350" y="752">0.24</text><text x="1350" y="764">3.95</text><text x="1350" y="776">7.06</text>
    <text x="1393" y="728">2.03</text><text x="1393" y="740">1.15</text><text x="1393" y="752">0.47</text><text x="1393" y="764">3.95</text><text x="1393" y="776">7.06</text></g>
    <g class="t s9 m"><text x="1007" y="788">序号</text><text x="1059" y="788">图号</text><text x="1154" y="788">名称</text><text x="1234" y="788">型号</text><text x="1278" y="788">材质</text><text x="1322" y="788">数量</text><text x="1365" y="788">单重Kg</text><text x="1410" y="788">总重Kg</text></g>
    <g class="t s11 m"><text x="1007" y="852">版次</text><text x="1028" y="852">状</text><text x="1044" y="852">态</text><text x="1113" y="852">说</text><text x="1151" y="852">明</text><text x="1223" y="852">编</text><text x="1245" y="852">制</text><text x="1267" y="852">校</text><text x="1289" y="852">核</text><text x="1311" y="852">审</text><text x="1332" y="852">核</text><text x="1355" y="852">批</text><text x="1377" y="852">准</text><text x="1409" y="852">日期</text>
    <text x="1223" y="878">图</text><text x="1245" y="878">名</text><text x="1223" y="911">图</text><text x="1245" y="911">号</text><text x="1003" y="914">项</text><text x="1027" y="914">目</text><text x="1003" y="940">阶</text><text x="1026" y="940">段</text><text x="1090" y="940">专</text><text x="1112" y="940">业</text><text x="1234" y="940">比例</text><text x="1307" y="940">图幅</text><text x="1400" y="914">版次</text><text x="1421" y="920">0</text><text x="1368" y="941">第</text><text x="1381" y="944">1</text><text x="1395" y="941">张共</text><text x="1412" y="944">1</text><text x="1423" y="941">张</text></g>
    <g class="t serif m"><text x="1007" y="862">REV.</text><text x="1036" y="862">STATUS</text><text x="1131" y="862">DESCRIPTION</text><text x="1234" y="862">PREPARED</text><text x="1278" y="862">CHECKED</text><text x="1322" y="862">APPROVED</text><text x="1366" y="862">AUTHORIZED</text><text x="1410" y="862">DATE</text><text x="1234" y="890">DRAWING</text><text x="1233" y="898">NAME</text><text x="1234" y="921">DRAWING</text><text x="1233" y="929">NO.</text><text x="1014" y="926">PROJECT</text><text x="1014" y="951">STAGE</text><text x="1101" y="951">SPECIALITY</text><text x="1234" y="951">SCALE</text><text x="1307" y="951">SIZE</text><text x="1401" y="926">REV.</text><text x="1396" y="951">OF</text></g>
    <g class="t s10 m"><text class="s12" x="1083" y="886">易构工作室</text><text class="s12" x="1353" y="886">6吨吊耳组件图</text><text x="1088" y="917">吊装工程</text><text x="1334" y="916">DE-6T-001</text><text x="1060" y="944">制造</text><text x="1147" y="944">结构</text><text x="1342" y="945">A3</text></g>
    <text class="t s10" x="1004" y="966">本文件版权为易构工作室所有，未经许可不得转给第三者或复制。</text>
  </svg>
</section>
</body>
</html>
```
FILE: styles.css
```css
* { box-sizing: border-box; }
body {
  margin: 0;
  height: 100vh;
  display: flex;
  flex-direction: column;
  overflow: hidden;
  position: relative;
  background: #f0f0f0;
  font: 12px/18px "Noto Sans", "Noto Sans CJK SC", sans-serif;
  color: #222;
}
button { font: inherit; color: inherit; background: none; border: 0; padding: 0; }
i, b { font-style: normal; }
.defs { position: absolute; }

/* title bar and menu */
.head { background: #598b7c; color: #fff; flex: none; }
.titlebar { height: 32px; padding-top: 1px; display: grid; grid-template-columns: 1fr auto 1fr; align-items: center; }
.quick { display: flex; align-items: center; gap: 11px; padding-left: 10px; }
.title { margin: 0 4px 0 0; padding-top: 1px; font-size: 12px; font-weight: 400; }
.title span { color: #a5c5bb; }
.status { display: flex; align-items: center; justify-content: flex-end; }
.lic { margin: 0 9px 0 13px; }
.ppl { margin-right: 4px; }
.wb { width: 48px; height: 31px; display: grid; place-items: center; }
.wb:first-of-type { margin-left: 4px; }
.menubar { height: 27px; display: flex; justify-content: space-between; }
.tabs { display: flex; }
.tab { padding: 3px 13px 0 12px; width: auto; }
.tab.on { background: #dcdcdc; color: #222; padding-left: 13px; }
.tools { display: flex; align-items: center; gap: 9px; padding-right: 1px; }
.tl { display: flex; align-items: center; gap: 13px; }
.mdi { display: flex; margin-left: -5px; }
.mdi button { width: 24px; height: 24px; display: grid; place-items: center; }

/* ribbon */
.ribbon { height: 85px; flex: none; display: flex; background: #dcdcdc; border-bottom: 1px solid #c6c6c6; }
.checks { display: flex; gap: 9px; padding: 6px 7px 0 9px; border-right: 1px solid #c6c6c6; }
.checks label { display: flex; align-items: center; gap: 5px; height: 28px; white-space: nowrap; }
.checks .mid { padding-top: 14px; }
.checks input { appearance: none; width: 14px; height: 14px; margin: 0; background: #fff; border: 1px solid #9a9a9a; display: grid; place-items: center; }
.checks input:checked::before { content: ""; width: 4px; height: 7px; border: solid #777; border-width: 0 2px 2px 0; transform: rotate(40deg); }
.checks > div + div { padding-left: 1px; }
.group { display: flex; padding: 0 4px; border-right: 1px solid #c6c6c6; }
.group button { min-width: 40px; padding: 10px 4px 0; display: flex; flex-direction: column; align-items: center; gap: 5px; white-space: nowrap; }
.group .menu { padding: 10px 2px 0; min-width: 54px; }
.group svg { width: 32px; height: 32px; }
.drop { display: flex; align-items: center; gap: 6px; height: 32px; }
.drop i { width: 5px; height: 5px; margin-right: 2px; border: solid #555; border-width: 0 2px 2px 0; transform: rotate(45deg); }

/* navigation tree */
.work { flex: 1; min-height: 0; display: flex; }
.side { width: 386px; flex: none; display: flex; background: #fff; border: 1px solid #828790; overflow: hidden; }
.root { flex: 1; min-width: 0; }
.tree { list-style: none; margin: 0; padding: 0; }
.tree .tree { margin-left: 23px; }
.tree li { background: repeating-linear-gradient(#777 0 1px, transparent 1px 2px) 14px 0 / 1px 100% no-repeat; }
.tree li:last-child { background-size: 1px 17px; }
.root > li:last-child { background-position: 14px 17px; background-size: 1px 100%; }
.row { height: 30px; display: flex; align-items: center; padding: 0 0 1px 10px; font-size: 15px; line-height: 29px; color: #000; white-space: nowrap; background: repeating-linear-gradient(90deg, #777 0 1px, transparent 1px 2px) 15px 17px / 12px 1px no-repeat; }
.row.leaf { padding-left: 28px; }
.row svg { width: 18px; height: 18px; margin: 3px 6px 0 0; flex: none; }
.row .pale { opacity: .6; }
.row b { margin-top: 4px; font: 13px/25px "Liberation Mono", monospace; }
.ex { width: 9px; height: 9px; margin: 6px 9px 0 0; border: 1px solid #8a8a8a; background: linear-gradient(#3a5a9a, #3a5a9a) center / 5px 1px no-repeat, #f4f4f4; flex: none; }
.scroll { width: 17px; background: #f0f0f0; display: flex; justify-content: center; padding-top: 18px; }
.scroll i { width: 2px; height: 800px; background: #858585; }

/* document area */
.main { flex: 1; min-width: 0; display: flex; flex-direction: column; padding-left: 11px; }
.doctabs { height: 25px; flex: none; padding-top: 1px; border-bottom: 2px solid #fff; }
.doctab { height: 22px; width: 120px; padding: 2px 0 0 10px; display: flex; align-items: center; gap: 15px; background: #fff; border-right: 2px solid #6b6b6b; font-size: 13px; font-weight: 700; color: #0078d7; }
.page { flex: 1; min-height: 0; display: flex; flex-direction: column; border: 2px solid #6b6b6b; border-width: 2px 0 0 2px; margin-right: 2px; background: #f7f7f7; border-bottom: 2px solid #e0e0e0; }
.subtabs { display: flex; flex: none; height: 21px; background: #f0f0f0; border-bottom: 1px solid #dcdcdc; }
.st { padding: 1px 5px 0 7px; color: #000; }
.st + .st { border: 1px solid #dcdcdc; border-bottom: 0; padding: 1px 4px 0; margin-top: 2px; }
.cols { flex: 1; min-height: 0; display: flex; gap: 6px; padding: 3px 10px 10px 5px; }
.left { width: 400px; flex: none; border: 1px solid #646464; display: flex; flex-direction: column; justify-content: flex-end; padding: 0 5px 56px 8px; }
.params { display: flex; align-items: flex-end; gap: 8px; padding: 0 17px 6px 32px; border: 2px solid #e2e2e2; border-left-color: #646464; }
.params label { line-height: 22px; }
.params input { width: 60px; height: 22px; margin: 0 auto 2px 0; border: 1px solid #777; background: #fff; padding: 0 2px; font: inherit; }
.params button { width: 62px; height: 26px; border: 1px solid #aaa; border-radius: 3px; background: #fafafa; }
.right { flex: 1; min-width: 0; display: flex; flex-direction: column; }
.figure { flex: 1; min-height: 0; margin: 0; border: 1px solid #e0e0e0; padding: 5px 4px 9px; display: flex; }
.figure legend { padding: 0; line-height: 20px; color: #000; }
.fig { flex: 1; display: flex; justify-content: flex-end; overflow: hidden; background: linear-gradient(#f7f7f7 44px, #fff 44px); border: 1px solid #646464; }
.result { height: 118px; flex: none; margin: 3px 0 16px; padding: 50px 0 0 24px; background: #90ee90; border: 2px solid #7a7a7a; border-width: 2px 0 0 2px; color: #000; }
.result p { margin: 0; line-height: 15px; }
.foot { height: 26px; flex: none; display: flex; align-items: center; justify-content: flex-end; padding: 2px 6px 0 0; }
.foot .ring { margin: 0 12px 0 13px; }
.foot span { margin-right: 46px; }
.foot a { color: #00f; }
.desk { height: 8px; flex: none; display: flex; align-items: flex-end; gap: 407px; padding-left: 349px; border-top: 1px solid #a9b48a; background: linear-gradient(90deg, #d2ebc4, #d8ecb4 20%, #ecee90 29%, #f2e8a0 38%, #d9eaa8 48%, #cfe8c4 56%, #e6efa0 66%, #d2e9c0); }
.desk i { width: 10px; height: 2px; border-radius: 5px 5px 0 0; background: #c8402a; }
.desk b { width: 35px; height: 4px; margin-right: -21px; background: #f4f6dc; border-radius: 3px 3px 0 0; }

/* floating CAD viewer */
.win { position: absolute; left: 336px; top: 201px; width: 1193px; border-radius: 8px; overflow: hidden; background: #000; box-shadow: 0 0 0 1px rgba(0,0,0,.26), 0 16px 48px 4px rgba(0,0,0,.48); }
.wtitle { height: 30px; display: flex; align-items: center; background: #eef3fb; padding-left: 9px; color: #000; }
.wtitle span { margin: 0 auto 0 7px; }
.wtitle button { width: 46px; height: 28px; display: grid; place-items: center; }
.wtools { height: 37px; display: flex; align-items: center; background: linear-gradient(#fdfdfd, #f1f1f1); padding-left: 3px; border-radius: 0 0 4px 4px; }
.wtools button { width: 34px; height: 36px; display: grid; place-items: center; }
.wtools svg { width: 28px; height: 28px; }
.grip { width: 2px; height: 26px; margin-right: 5px; background: repeating-linear-gradient(#bbb 0 2px, transparent 2px 4px); }
.cad { display: block; width: 100%; background: repeating-linear-gradient(90deg, transparent 0 7px, rgba(255,255,255,.008) 7px 11px, transparent 11px 23px, rgba(0,0,0,.07) 23px 25px, transparent 25px 31px), radial-gradient(ellipse 60% 76% at 53% 38%, #262626, #1d1d1d 40%, #0d0d0d 76%, #030303); }
.w { fill: none; stroke: #f0f0f0; }
.gr { fill: none; stroke: #909090; }
.g { fill: none; stroke: #00e000; }
.b { fill: none; stroke: #0000f0; }
.c { fill: none; stroke: #00e8e8; stroke-width: 1; }
.y { fill: none; stroke: #ff0; stroke-width: 3; }
.d { marker-start: url(#ag); marker-end: url(#ag); }
.e { marker-end: url(#ag); }
.t { fill: #d8d8d8; font-family: "Liberation Sans", "Noto Sans CJK SC", sans-serif; font-size: 8px; dominant-baseline: central; }
.m { text-anchor: middle; }
.s9 { font-size: 9px; }
.s10 { font-size: 10px; }
.s11 { font-size: 11px; }
.s12 { font-size: 12px; }
.gt { fill: #0f0; }
.cy { fill: #00a8a8; }
.mono { font-family: "Liberation Mono", monospace; font-size: 9px; }
.serif { font-family: "Liberation Serif", serif; font-size: 7px; }
.note { font-family: "Liberation Serif", "Noto Sans CJK SC", serif; font-size: 9px; fill: #bdbdbd; }
.a { font-size: 7px; }
.bold { font-family: "Noto Sans", sans-serif; font-size: 7px; font-weight: 700; fill: #fff; }
```
